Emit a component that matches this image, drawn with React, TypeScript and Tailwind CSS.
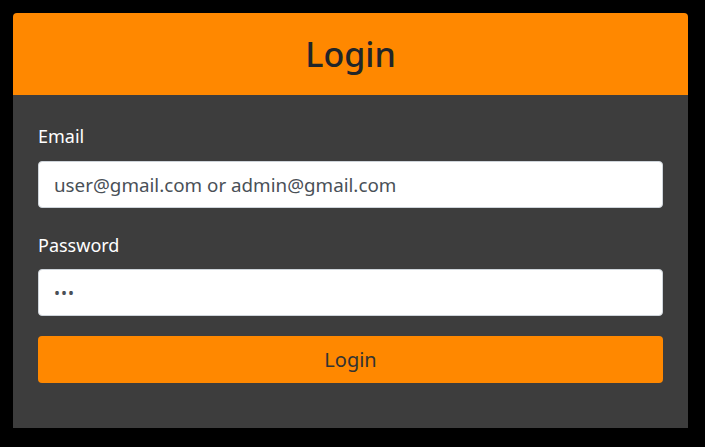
import { useState } from "react";

const font = { fontFamily: '"Noto Sans", "Open Sans", sans-serif' };

export default function App() {
  const [email, setEmail] = useState("");
  const [password, setPassword] = useState("abc");

  return (
    <div className="w-full h-screen bg-black pt-[13px] pl-[13px]" style={font}>
      <div className="w-[675px] h-[415px] flex flex-col">
        <div className="h-[82px] shrink-0 rounded-t-[4px] bg-[#ff8800] flex items-center justify-center">
          <h1 className="text-[34px] font-medium leading-none text-[#212529]">Login</h1>
        </div>
        <form
          className="flex-1 bg-[#3d3d3d] px-[25px] pt-[28px] flex flex-col"
          onSubmit={(e) => e.preventDefault()}
        >
          <label className="text-[18px] leading-[27px] text-white mb-[11px]">Email</label>
          <input
            type="email"
            value={email}
            onChange={(e) => setEmail(e.target.value)}
            placeholder="user@gmail.com or admin@gmail.com"
            className="block h-[47px] w-full rounded-[4px] border border-[#ced4da] bg-white px-[15px] text-[18.8px] text-[#495057] placeholder:text-[#495057] outline-none"
          />
          <label className="mt-[24px] text-[18px] leading-[27px] text-white mb-[10px]">Password</label>
          <input
            type="password"
            value={password}
            onChange={(e) => setPassword(e.target.value)}
            className="block h-[47px] w-full rounded-[4px] border border-[#ced4da] bg-white px-[15px] text-[16px] tracking-[1px] text-[#495057] outline-none"
          />
          <button
            type="submit"
            className="mt-[20px] h-[47px] w-full rounded-[4px] bg-[#ff8800] text-[20px] text-[#333333]"
          >
            Login
          </button>
        </form>
      </div>
    </div>
  );
}
